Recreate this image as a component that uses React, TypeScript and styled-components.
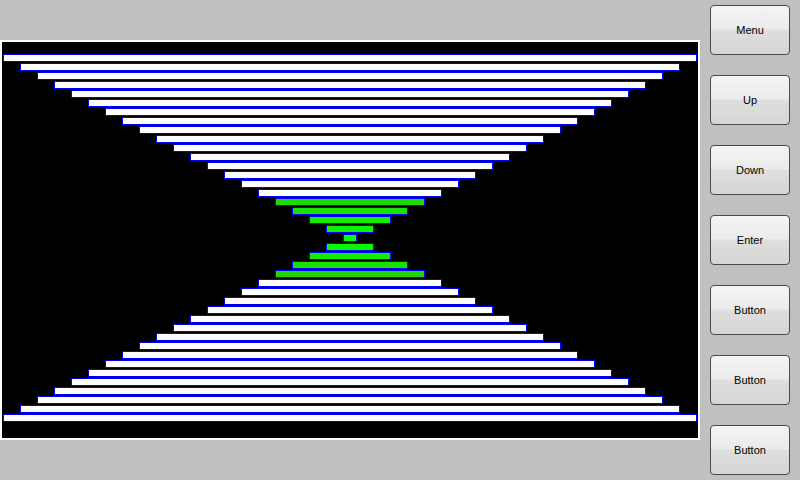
import styled, { createGlobalStyle } from "styled-components"

const GlobalStyle = createGlobalStyle`
  html, body {
    margin: 0;
    padding: 0;
    background: #c0c0c0;
  }
  body {
    font-family: "Liberation Sans", Arial, sans-serif;
  }
`

const Screen = styled.div`
  display: flex;
  width: 800px;
  height: 480px;
  background: #c0c0c0;
  overflow: hidden;
`

const CanvasFrame = styled.div`
  box-sizing: border-box;
  margin-top: 40px;
  width: 700px;
  height: 400px;
  border: 2px solid #ffffff;
  background: #000000;
  line-height: 0;
`

const ButtonColumn = styled.div`
  display: flex;
  flex-direction: column;
  gap: 20px;
  padding: 5px 0 0 10px;
`

const PanelButton = styled.button`
  box-sizing: border-box;
  width: 80px;
  height: 50px;
  padding: 0;
  border: 1px solid #4a4a4a;
  border-radius: 4px;
  background: linear-gradient(
    to bottom,
    #f4f4f4 0%,
    #ebebeb 48%,
    #dedede 50%,
    #d6d6d6 100%
  );
  font-family: "Liberation Sans", Arial, sans-serif;
  font-size: 11px;
  color: #000000;
  cursor: pointer;
`

const BUTTONS = ["Menu", "Up", "Down", "Enter", "Button", "Button", "Button"]

const BAR_COUNT = 41

function barFill(d: number): string {
  if (d < 16) return "#ffffff"
  // greens get a touch brighter toward the waist
  const t = (d - 16) / 4
  const r = Math.round(0x22 * (1 - t))
  const g = Math.round(0xd8 + (0xff - 0xd8) * t)
  return `rgb(${r}, ${g}, 0)`
}

function Hourglass(): JSX.Element {
  const bars = Array.from({ length: BAR_COUNT }, (_, i) => {
    const d = Math.min(i, BAR_COUNT - 1 - i)
    const x = 1 + 17 * d
    const w = 694 - 34 * d
    const y = 12 + 9 * i
    return (
      <rect
        key={i}
        x={x + 0.5}
        y={y + 0.5}
        width={w - 1}
        height={7}
        fill={barFill(d)}
        stroke="#0000ff"
        strokeWidth={1}
      />
    )
  })

  return (
    <svg width={696} height={396} viewBox="0 0 696 396" shapeRendering="crispEdges">
      {bars}
    </svg>
  )
}

export default function App(): JSX.Element {
  return (
    <>
      <GlobalStyle />
      <Screen>
        <CanvasFrame>
          <Hourglass />
        </CanvasFrame>
        <ButtonColumn>
          {BUTTONS.map((label, i) => (
            <PanelButton key={i} type="button">
              {label}
            </PanelButton>
          ))}
        </ButtonColumn>
      </Screen>
    </>
  )
}
